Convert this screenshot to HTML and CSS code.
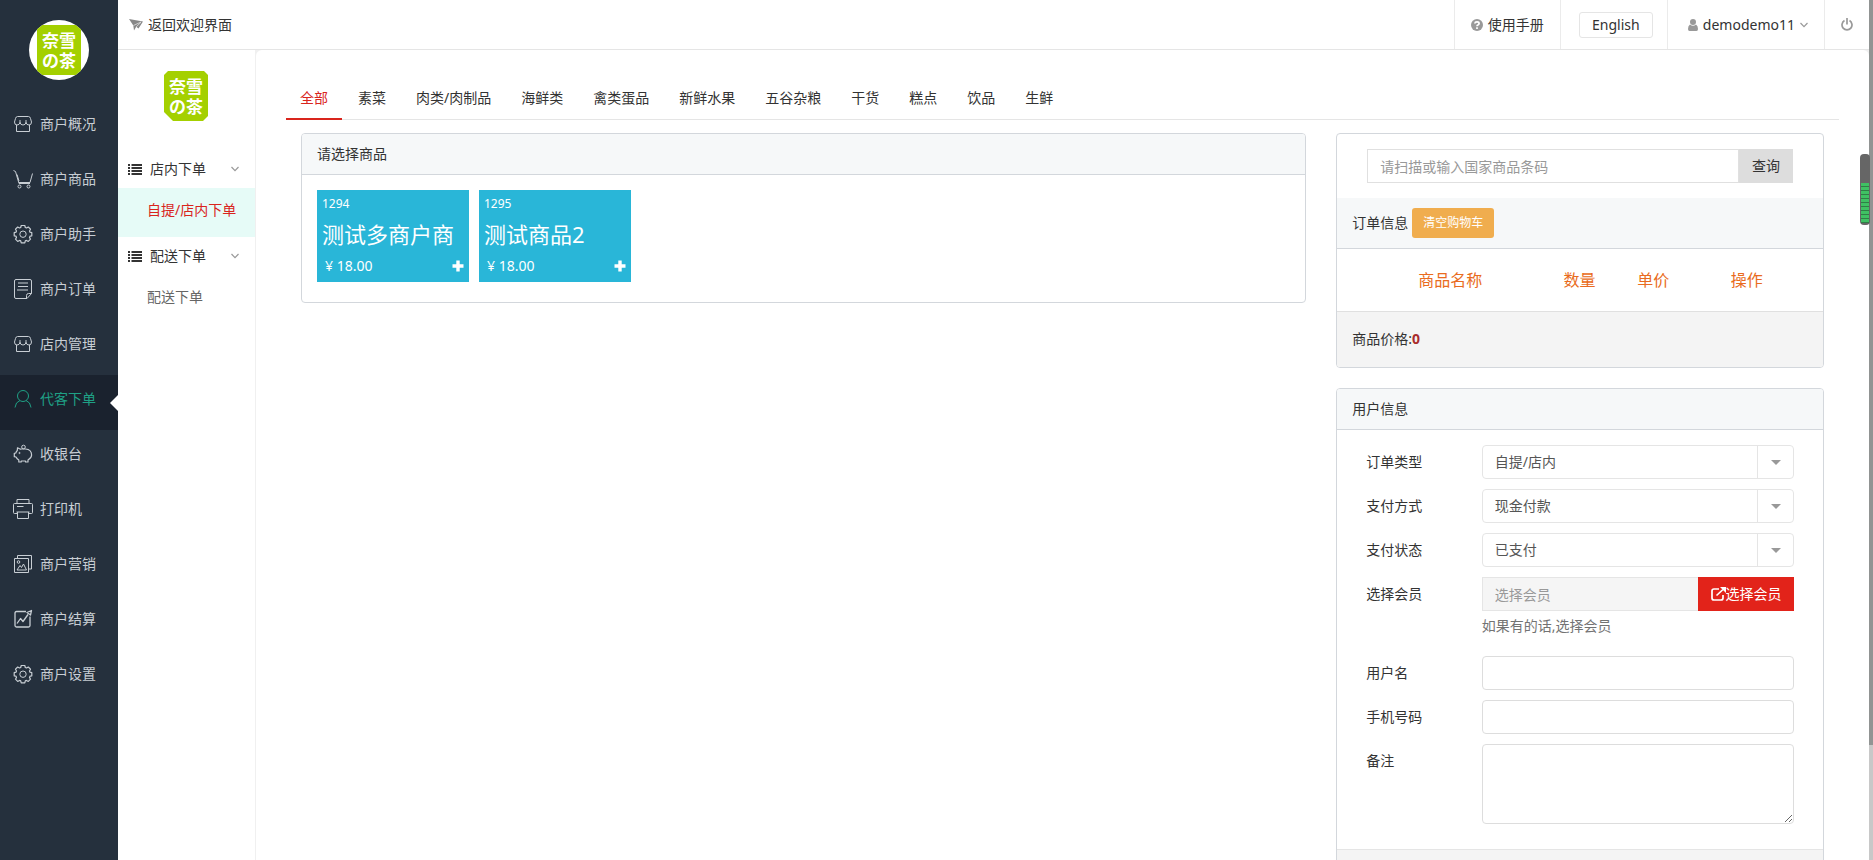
FILE: index.html
```html
<!DOCTYPE html>
<html lang="zh-CN">
<head>
<meta charset="utf-8">
<title>代客下单</title>
<link rel="stylesheet" href="styles.css">
</head>
<body>
<svg class="defs" aria-hidden="true">
  <symbol id="store" viewBox="0 0 20 20"><path d="M4.500 2.500H15.500Q17 2.500 17.500 4.500L18.500 8Q18.500 11 16 11Q13.500 11 13 8.500Q12.500 11 10 11Q7.500 11 7 8.500Q6.500 11 4 11Q1.500 11 1.500 8L2.500 4.500Q3 2.500 4.500 2.500ZM7 6V9M13 6V9M3.500 11V17.500H16.500V11"/></symbol>
  <symbol id="cart" viewBox="0 0 20 20"><path d="M0.500 1.500L2.500 2.500L6 14.500H17M6 12L4 5.500M19.500 4.500L17 13.500H6"/><circle cx="6.500" cy="17.500" r="1.500"/><circle cx="15.500" cy="17.500" r="1.500"/></symbol>
  <symbol id="gear" viewBox="0 0 20 20"><path stroke-width="1.200" stroke-linejoin="round" d="M8.200 1.500H11.800L12.300 3.500L13.500 4L15.300 3L17.500 5.200L16.500 7L17 8.200L18.800 8.600V11.800L17 12.200L16.500 13.400L17.500 15.200L15.300 17.400L13.500 16.400L12.300 16.900L11.800 18.800H8.200L7.700 16.900L6.500 16.400L4.700 17.400L2.500 15.200L3.500 13.400L3 12.200L1.200 11.800V8.600L3 8.200L3.500 7L2.500 5.200L4.700 3L6.500 4L7.700 3.500Z"/><circle cx="10" cy="10.200" r="3.200"/></symbol>
  <symbol id="order" viewBox="0 0 20 20"><path d="M3 0.500H17Q18.500 0.500 18.500 2V14.500L14 19.500H3Q1.500 19.500 1.500 18V2Q1.500 0.500 3 0.500ZM18.500 14.500H15.500Q13.500 14.500 13.500 16.500V19.500M5 4H15M5 7.500H15M4 11H15"/></symbol>
  <symbol id="user" viewBox="0 0 20 20"><circle cx="10" cy="7" r="5.500"/><path d="M2 18.500Q2.500 13 7 11.500M13 11.500Q17.500 13 18 18.500"/></symbol>
  <symbol id="pig" viewBox="0 0 20 20"><path stroke-width="1.200" stroke-linejoin="round" d="M7.500 5.200L4.500 3.800L4.300 6.500Q3.200 7.500 2.800 9L1.300 9.300V12.700L3 13Q4 15 5.800 16V18H8.200V17H12.500V18H15V16Q18.600 14 18.600 11Q18.600 5.500 12.500 5H8Z"/><circle cx="10.500" cy="3" r="1.800"/><circle cx="6.500" cy="9" r=".6"/></symbol>
  <symbol id="printer" viewBox="0 0 20 20"><path d="M4 4.500V0.500H16V4.500M4.500 14.500H1.500Q0.500 14.500 0.500 13.500V5.500Q0.500 4.500 1.500 4.500H18.500Q19.500 4.500 19.500 5.500V13.500Q19.500 14.500 18.500 14.500H15.500M3.500 13H16.500M4.500 13V19.500H15.500V13M4 7.500H10.500"/></symbol>
  <symbol id="photo" viewBox="0 0 20 20"><path d="M1.500 4.500H15.500V18.500H1.500ZM4.500 4V1.500H18.500V15H16M4 16L7 11.500L8.500 13.500L10.500 10L13.500 16Z"/><circle cx="5.500" cy="8" r="1.300"/></symbol>
  <symbol id="chart" viewBox="0 0 20 20"><path stroke-width="1.300" stroke-linejoin="round" d="M13 2.500H3.500Q2 2.500 2 4V16.500Q2 18 3.500 18H15.500Q17 18 17 16.500V7.500M4 14.500L7.500 9.500L10 12.500L15 5.500M14 3.500L18.500 1.500L17.500 6Z"/></symbol>
  <symbol id="plane" viewBox="0 0 14 12"><path fill="currentColor" stroke="none" d="M0 0L14 2.500L9.500 9.500L7.200 7.800L5 11.500L4.300 6.500Z"/><path stroke="#fff" stroke-width=".6" d="M4.500 6.500L12 3M7.200 7.800L12 3.300"/></symbol>
  <symbol id="list" viewBox="0 0 14 11"><path fill="currentColor" stroke="none" d="M0 0H2V2H0ZM0 3H2V5H0ZM0 6H2V8H0ZM0 9H2V11H0ZM3.500 0H14V2H3.500ZM3.500 3H14V5H3.500ZM3.500 6H14V8H3.500ZM3.500 9H14V11H3.500Z"/></symbol>
  <symbol id="down" viewBox="0 0 8 8"><path stroke-width="1.200" d="M.5 2L4 5.700L7.500 2"/></symbol>
  <symbol id="help" viewBox="0 0 12 12"><circle cx="6" cy="6" r="6" fill="currentColor" stroke="none"/><path stroke="#fff" stroke-width="1.700" d="M3.800 4.500Q4 2.900 6 2.900Q8.100 2.900 8.100 4.500Q8.100 5.400 6.900 6Q6 6.400 6 7.200M6 8.300V10"/></symbol>
  <symbol id="person" viewBox="0 0 10 12"><path fill="currentColor" stroke="none" d="M5 0A2.900 2.900 0 0 1 5 6A2.900 2.900 0 0 1 5 0ZM2 5.500Q5 8 8 5.500Q10 6.500 10 10Q10 12 8.500 12H1.500Q0 12 0 10Q0 6.500 2 5.500Z"/></symbol>
  <symbol id="power" viewBox="0 0 12 13"><path stroke-width="1.700" d="M3.500 2.600A5 5 0 1 0 8.500 2.600M6 0V6.500"/></symbol>
  <symbol id="plus" viewBox="0 0 12 12"><path stroke-width="3.400" d="M6 .5V11.500M.5 6H11.500"/></symbol>
  <symbol id="external" viewBox="0 0 15 14"><path stroke-width="1.700" d="M8 2H3Q1 2 1 4V11Q1 13 3 13H10Q12 13 12 11V8M5.500 8.500L12 2.500"/><path fill="currentColor" stroke="none" d="M9 0H15V6Z"/></symbol>
</svg>

<div class="app">
  <nav class="rail" aria-label="主菜单">
    <div class="avatar"><svg class="logo" viewBox="0 0 44 50"><path d="M0 0H44V50H0Z"/><text x="5" y="22">奈</text><text x="22" y="22">雪</text><text x="5" y="42">の</text><text x="22" y="42">茶</text></svg></div>
    <a class="rail-item" href="#"><svg><use href="#store"/></svg>商户概况</a>
    <a class="rail-item" href="#"><svg><use href="#cart"/></svg>商户商品</a>
    <a class="rail-item" href="#"><svg><use href="#gear"/></svg>商户助手</a>
    <a class="rail-item" href="#"><svg><use href="#order"/></svg>商户订单</a>
    <a class="rail-item" href="#"><svg><use href="#store"/></svg>店内管理</a>
    <a class="rail-item active" href="#"><svg><use href="#user"/></svg>代客下单</a>
    <a class="rail-item" href="#"><svg><use href="#pig"/></svg>收银台</a>
    <a class="rail-item" href="#"><svg><use href="#printer"/></svg>打印机</a>
    <a class="rail-item" href="#"><svg><use href="#photo"/></svg>商户营销</a>
    <a class="rail-item" href="#"><svg><use href="#chart"/></svg>商户结算</a>
    <a class="rail-item" href="#"><svg><use href="#gear"/></svg>商户设置</a>
  </nav>

  <div class="page">
    <header class="topbar">
      <a class="welcome" href="#"><svg class="i-plane"><use href="#plane"/></svg>返回欢迎界面</a>
      <a class="top-cell" href="#"><svg class="i-help"><use href="#help"/></svg>使用手册</a>
      <div class="top-cell lang-cell"><button class="lang" type="button">English</button></div>
      <a class="top-cell account" href="#"><svg class="i-person"><use href="#person"/></svg>demodemo11<svg class="i-down"><use href="#down"/></svg></a>
      <a class="top-cell" href="#" aria-label="退出"><svg class="i-power"><use href="#power"/></svg></a>
    </header>

    <div class="body">
      <nav class="side" aria-label="子菜单">
        <svg class="logo side-logo" viewBox="0 0 44 50"><path d="M4 0H40L44 4V45L39 50H9L0 41V4Z"/><text x="5" y="22">奈</text><text x="22" y="22">雪</text><text x="5" y="42">の</text><text x="22" y="42">茶</text></svg>
        <a class="side-head" href="#"><svg class="i-list"><use href="#list"/></svg>店内下单<svg class="i-down"><use href="#down"/></svg></a>
        <a class="side-sub active" href="#">自提/店内下单</a>
        <a class="side-head" href="#"><svg class="i-list"><use href="#list"/></svg>配送下单<svg class="i-down"><use href="#down"/></svg></a>
        <a class="side-sub" href="#">配送下单</a>
      </nav>

      <main class="main">
        <nav class="tabs" aria-label="分类">
          <a class="tab active" href="#">全部</a><a class="tab" href="#">素菜</a><a class="tab" href="#">肉类/肉制品</a><a class="tab" href="#">海鲜类</a><a class="tab" href="#">禽类蛋品</a><a class="tab" href="#">新鲜水果</a><a class="tab" href="#">五谷杂粮</a><a class="tab" href="#">干货</a><a class="tab" href="#">糕点</a><a class="tab" href="#">饮品</a><a class="tab" href="#">生鲜</a>
        </nav>
        <div class="columns">
          <section class="panel">
            <h2 class="panel-head">请选择商品</h2>
            <div class="tiles">
              <button class="tile" type="button"><span class="code">1294</span><span class="name">测试多商户商</span><span class="price">¥ 18.00<svg class="i-plus"><use href="#plus"/></svg></span></button>
              <button class="tile" type="button"><span class="code">1295</span><span class="name">测试商品2</span><span class="price">¥ 18.00<svg class="i-plus"><use href="#plus"/></svg></span></button>
            </div>
          </section>

          <div class="stack">
            <section class="panel">
              <form class="search">
                <input class="search-input" type="text" placeholder="请扫描或输入国家商品条码" aria-label="商品条码">
                <button class="search-btn" type="button">查询</button>
              </form>
              <h2 class="panel-head order-head">订单信息<button class="clear" type="button">清空购物车</button></h2>
              <div class="cart-wrap">
                <table class="cart">
                  <thead><tr><th class="c-name">商品名称</th><th class="c-num">数量</th><th class="c-price">单价</th><th>操作</th></tr></thead>
                </table>
              </div>
              <div class="total">商品价格:<strong>0</strong></div>
            </section>

            <section class="panel">
              <h2 class="panel-head">用户信息</h2>
              <form class="form">
                <div class="row"><label for="type">订单类型</label><div class="select"><select id="type"><option>自提/店内</option></select></div></div>
                <div class="row"><label for="pay">支付方式</label><div class="select"><select id="pay"><option>现金付款</option></select></div></div>
                <div class="row"><label for="state">支付状态</label><div class="select"><select id="state"><option>已支付</option></select></div></div>
                <div class="row"><label for="member">选择会员</label>
                  <div><div class="group"><input id="member" class="member" type="text" placeholder="选择会员" readonly><button class="pick" type="button"><svg class="i-external"><use href="#external"/></svg>选择会员</button></div>
                  <p class="hint">如果有的话,选择会员</p></div></div>
                <div class="row"><label for="name">用户名</label><input id="name" class="field" type="text"></div>
                <div class="row"><label for="phone">手机号码</label><input id="phone" class="field" type="text"></div>
                <div class="row"><label for="note">备注</label><textarea id="note" class="field"></textarea></div>
              </form>
              <div class="form-foot"></div>
            </section>
          </div>
        </div>
      </main>
    </div>
  </div>
  <div class="scroll"><div class="thumb"></div></div>
  <div class="battery"><div class="charge"></div></div>
</div>
</body>
</html>
```
FILE: styles.css
```css
* { box-sizing: border-box; }
body {
  margin: 0;
  font: 14px/20px "Noto Sans", "Noto Sans CJK SC", sans-serif;
  color: #333;
  background: #fff;
}
a { color: inherit; text-decoration: none; }
button, input, select, textarea { font: inherit; color: inherit; margin: 0; }
button { border: 0; padding: 0; cursor: pointer; }
svg { display: block; flex: none; fill: none; stroke: currentColor; }
.defs { position: absolute; width: 0; height: 0; }
.logo { width: 44px; height: 50px; stroke: none; }
.logo path { fill: #a4d000; }
.logo text { fill: #fff; font: 700 17px "Noto Sans CJK SC", sans-serif; }

.app { display: flex; height: 100vh; overflow: hidden; }

.rail { width: 118px; flex: none; background: #25303d; color: #c8ced4; }
.avatar {
  width: 60px; height: 60px; margin: 20px auto; border-radius: 50%;
  background: #fff; overflow: hidden; display: grid; place-items: center;
}
.rail-item {
  position: relative; display: flex; align-items: center; gap: 7px;
  height: 55px; padding: 0 0 7px 13px;
}
.rail-item svg { width: 20px; height: 20px; }
.rail-item.active { background: #1a222e; color: #1fa085; }
.rail-item.active::after {
  content: ""; position: absolute; right: 0; top: 20px;
  border: 8px solid transparent; border-right-color: #fff; border-left: 0;
}

.page { flex: 1; min-width: 0; display: flex; flex-direction: column; }
.topbar { display: flex; height: 50px; flex: none; border-bottom: 1px solid #e5e5e5; }
.welcome { display: flex; align-items: center; gap: 5px; margin-right: auto; padding-left: 11px; }
.top-cell { display: flex; align-items: center; padding: 0 16px; gap: 5px; border-left: 1px solid #ebebeb; }
.lang-cell { padding: 0 14px 0 18px; }
.account { padding: 0 16px 0 20px; gap: 5px; }
.lang {
  width: 74px; height: 26px;
  border: 1px solid #e5e5e5; border-radius: 3px; background: #fff;
}
.i-plane { width: 14px; height: 12px; color: #888; }
.i-help { width: 12px; height: 12px; color: #999; stroke: none; }
.i-person { width: 10px; height: 12px; color: #999; }
.i-down { width: 8px; height: 8px; color: #999; }
.i-power { width: 12px; height: 13px; color: #999; }

.body { flex: 1; min-height: 0; display: flex; background: #f0f0f0; }
.side { width: 137px; flex: none; margin-right: 1px; background: #fff; }
.side-logo { margin: 21px 0 29px 46px; }
.side-head { display: flex; align-items: center; height: 38px; padding: 0 16px 0 10px; }
.side-head .i-down { margin-left: auto; }
.i-list { width: 14px; height: 11px; margin-right: 8px; }
.side-sub { display: block; height: 49px; padding: 12px 0 0 29px; color: #666; }
.side-sub.active { background: #e6fbf7; color: #d9251d; }

.main { flex: 1; min-width: 0; padding: 30px 30px 0; background: #fff; border-radius: 6px 6px 0 0; }
.tabs { display: flex; gap: 2px; height: 40px; border-bottom: 1px solid #e5e5e5; }
.tab { height: 40px; padding: 8px 14px; }
.tab.active { color: #d9251d; border-bottom: 2px solid #d9251d; }

.columns { display: grid; grid-template-columns: 2fr 1fr; align-items: start; padding-top: 13px; }
.columns > .panel, .stack { margin: 0 15px; }
.stack { display: grid; gap: 20px; }
.panel { border: 1px solid #d3d7dc; border-radius: 4px; overflow: hidden; background: #fff; }
.panel-head {
  margin: 0; padding: 10px 15px; font-size: 14px; font-weight: 400;
  background: #f6f8f9; border-bottom: 1px solid #d3d7dc;
}
.tiles { display: flex; flex-wrap: wrap; gap: 10px; padding: 15px 15px 20px; }
.tile {
  width: 152px; height: 92px; padding: 4px 5px; background: #29b6d8; color: #fff;
  display: flex; flex-direction: column; text-align: left;
}
.code { font-size: 12px; line-height: 20px; }
.name { font-size: 22px; line-height: 40px; }
.price { display: flex; align-items: center; justify-content: space-between; padding-left: 3px; line-height: 24px; }
.i-plus { width: 12px; height: 12px; }

.search { display: flex; padding: 15px 30px; }
.search-input { flex: 1; min-width: 0; height: 34px; padding: 0 12px; border: 1px solid #e0e0e0; background: #fff; }
.search-btn { width: 54px; background: #ddd; }
::placeholder { color: #999; opacity: 1; }
.order-head { display: flex; align-items: center; gap: 4px; min-height: 51px; }
.clear { width: 82px; height: 30px; border-radius: 3px; background: #f0ad4e; color: #fff; font-size: 12px; }
.cart-wrap { padding: 0 25px 0 15px; }
.cart { width: 100%; border-collapse: collapse; table-layout: fixed; }
.cart th { height: 62px; padding: 0; font-size: 16px; font-weight: 400; color: #e96b20; }
.c-name { width: 44%; }
.c-num { width: 14%; }
.c-price { width: 19%; }
.total { padding: 17px 15px 18px; background: #f4f4f4; border-top: 1px solid #e0e0e0; }
.total strong { color: #a92c2c; }

.form { display: grid; gap: 10px; padding: 15px 29px 25px; }
.row { display: grid; grid-template-columns: 27% minmax(0, 1fr); align-items: start; }
.row label { padding-top: 7px; }
.select, .field { width: 100%; height: 34px; border: 1px solid #ddd; border-radius: 4px; background: #fff; }
.select { position: relative; border-color: #e5e5e5; color: #555; }
.select select { width: 100%; height: 32px; padding: 0 12px; border: 0; background: none; appearance: none; }
.select::before { content: ""; position: absolute; right: 35px; top: 0; bottom: 0; border-left: 1px solid #e5e5e5; }
.select::after { content: ""; position: absolute; right: 12px; top: 14px; border: 5px solid transparent; border-top-color: #999; border-bottom: 0; }
.group { display: flex; }
.member { flex: 1; min-width: 0; height: 34px; padding: 0 12px; border: 1px solid #e5e5e5; border-right: 0; background: #f5f5f5; }
.pick { display: flex; align-items: center; justify-content: center; width: 96px; background: #e2231a; color: #fff; }
.i-external { width: 15px; height: 14px; }
.hint { margin: 5px 0 10px; color: #737373; }
textarea.field { display: block; height: 80px; }
.form-foot { height: 60px; background: #f4f4f4; border-top: 1px solid #e5e5e5; }

.scroll { width: 4px; flex: none; background: #c8c8c8; }
.thumb { height: 745px; max-height: 87%; background: #919493; }
.battery {
  position: fixed; right: 3px; top: 154px; width: 10px; height: 71px;
  padding: 29px 1px 2px; border-radius: 4px; background: #666;
}
.charge { height: 40px; background: repeating-linear-gradient(#3fc163 0 3px, #2f7f46 3px 4px); }
```
